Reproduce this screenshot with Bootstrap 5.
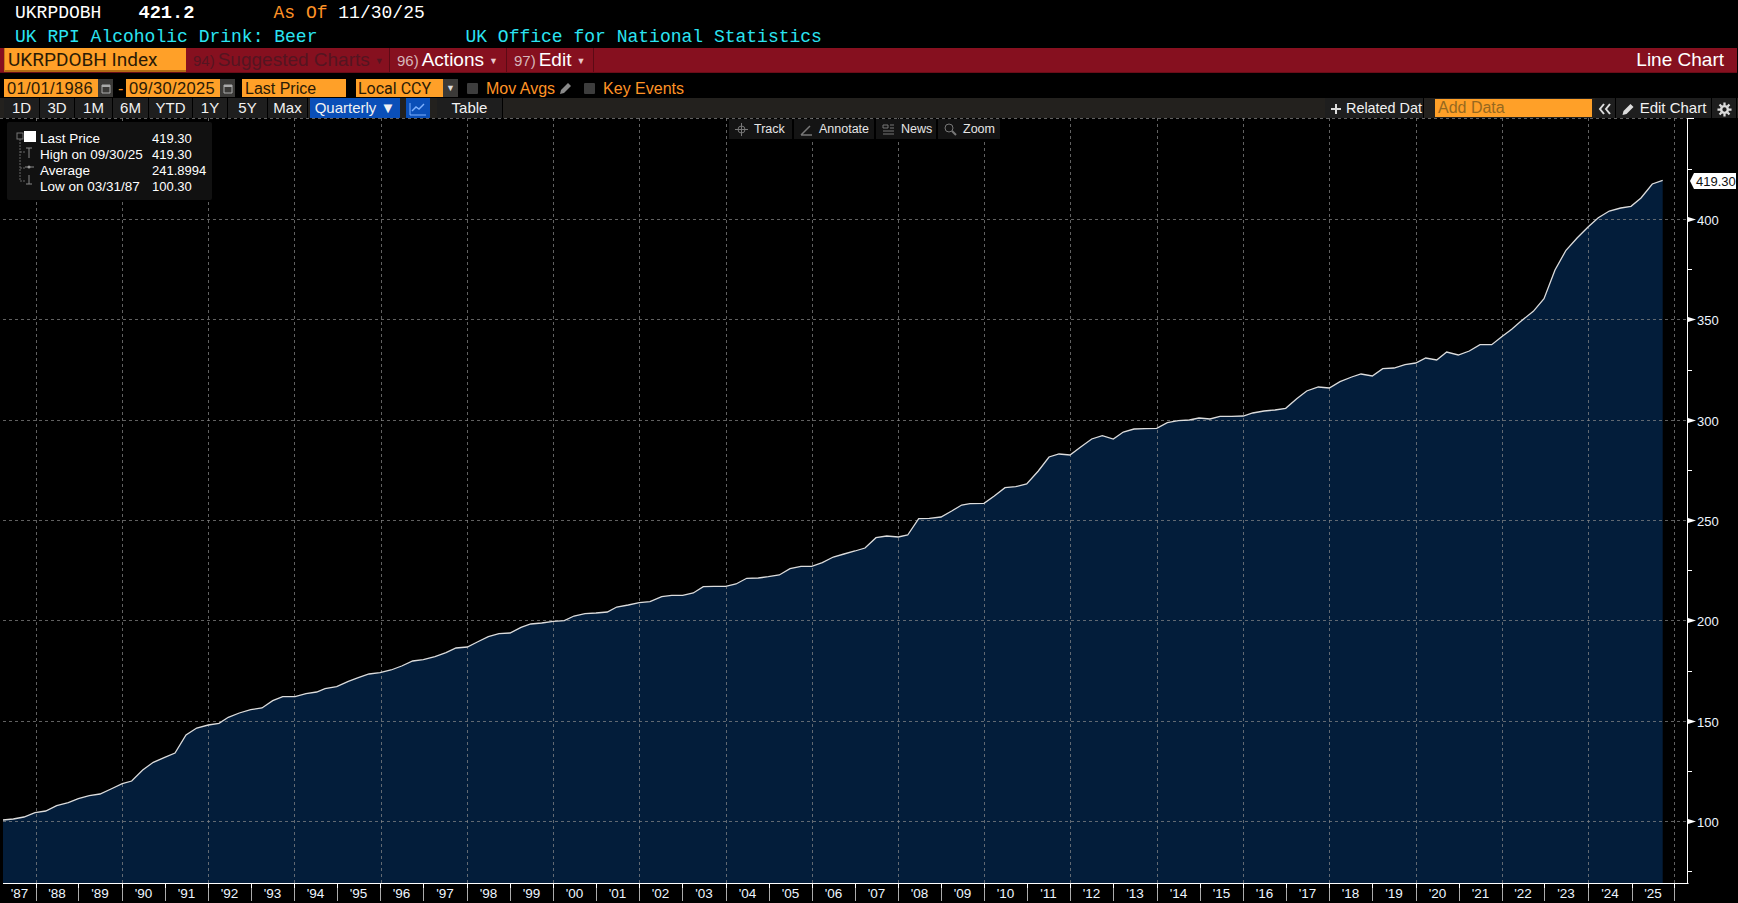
<!DOCTYPE html>
<html lang="en"><head><meta charset="utf-8"><title>UKRPDOBH Line Chart</title>
<link href="https://cdn.jsdelivr.net/npm/bootstrap@5.3.0/dist/css/bootstrap.min.css" rel="stylesheet">
<style>
html,body{height:100%;background:#000;overflow:hidden}
body{font-family:"Liberation Sans",Arial,sans-serif;color:#fff;width:1738px;height:903px}
.hdr{font-family:"Liberation Mono",monospace;font-size:18px;line-height:24px;height:24px;padding-left:15px;padding-top:1px;white-space:pre}
.cy{color:#2be4f2}.og{color:#ff9326}
.hdr b{font-size:18.7px;margin-left:37px;margin-right:79px}
.src{margin-left:148px}
.redbar{height:25px;margin-right:1px;background:#86101f;border-bottom:1px solid #6a0c18;font-size:19px;line-height:24px}
.sec{color:#fff;border-right:1px solid #5c0a15;padding-left:7px;white-space:nowrap}
.sec small{font-size:15px;color:#d6b6ba;margin-right:3px}
.sec i{font-style:normal;font-size:9px;margin-left:5px;vertical-align:2px;color:#e8c9cc}
.dim,.dim small,.dim i{color:#541521}
.oginp{background:#ffa028;color:#2a1a05;white-space:nowrap;overflow:hidden}
.main{width:182px;margin-left:4px;height:24px;padding-left:3px;font-family:Roboto,"Liberation Sans",sans-serif;font-size:19px;line-height:24px;border-left:1px solid #c77a1a;border-bottom:2px solid #b26c14}
.w1{width:204px}.w2{width:117px}.w3{width:87px}
.lc{padding-right:13px}
.filter{height:18px;margin-top:6px;margin-bottom:1px;font-size:16px;line-height:19px;padding-left:4px}
.filter .oginp{height:18px;padding-left:3px}
.date{width:94px;font-size:16.5px;letter-spacing:.35px}
.calb{width:15px;height:18px;background:#3b3a38;margin-right:5px}
.dash{width:8px;color:#ff9326}
.lp{width:104px;margin-left:7px;margin-right:10px}
.filter .ccy{width:87px;padding-left:2px;font-family:Roboto,"Liberation Sans",sans-serif;font-size:16px}
.ddb{width:15px;height:18px;background:#3b3a38;color:#ddd;font-size:9px;text-align:center;margin-right:9px}
.chk{width:11px;height:11px;background:#3d3d3d;margin-right:8px;border-radius:1px}
.pen{margin-right:11px}
.tools{height:20px;background:#23211e;font-size:15px;line-height:20px;padding-left:4px;padding-right:1px}
.tb{background:#1e1e1e;color:#f2f2f2;border-right:1px solid #000;text-align:center;white-space:nowrap;overflow:hidden;height:20px}
.tb1{width:36px}.tb2{width:44px}.tb3{width:40px}.tb4{width:35px}.tb5{width:38px}
.qt{width:90px;background:#0a4fb8;margin-left:2px;margin-right:6px;border:0}
.ic{width:24px;background:#0a4fb8;margin-right:7px;border:0}
.tbl{width:66px}
.rel{width:99px;text-align:left;padding-left:5px;margin-right:11px;font-size:14.4px}
.add{width:157px;height:18px;margin-top:1px;margin-right:3px;padding-left:3px;color:#96681f;line-height:18px;font-size:16px}
.chev{width:21px;color:#ddd}.edt{width:96px}.gear{width:25px}
.plot{position:relative;height:785px}
.plot>svg{display:block}
.legend{position:absolute;left:7px;top:4px;width:205px;height:78px;background:#111;font-size:13.5px;line-height:16px;padding:9px 0 0 9px;border-radius:2px}
.lrow{height:16px;white-space:nowrap}
.lrow span:first-child{width:112px}
.lrow span+span{font-size:13px}
.mini{position:absolute;left:729px;top:1px;height:20px;font-size:12.5px;line-height:20px;gap:2px}
.mb{background:#141414;color:#e6e6e6;height:20px;white-space:nowrap}
.m1{width:63px}.m2{width:80px}.m3{width:60px}.m4{width:62px}
.mb svg{margin:0 6px 0 6px;vertical-align:-3px}
.axt{font-size:13px;fill:#eef6ff}
.yrt{font-size:13.5px;fill:#eef6ff;text-anchor:middle}
.flagt{font-size:13px;fill:#111}
</style></head>
<body>
<div class="hdr d-flex"><span>UKRPDOBH</span><b>421.2</b><span class="og">As Of</span><span> 11/30/25</span></div>
<div class="hdr cy d-flex"><span>UK RPI Alcoholic Drink: Beer</span><span class="src">UK Office for National Statistics</span></div>
<div class="redbar d-flex">
  <div class="oginp main">UKRPDOBH Index</div>
  <div class="sec dim w1"><small>94)</small>Suggested Charts<i>▼</i></div>
  <div class="sec w2"><small>96)</small>Actions<i>▼</i></div>
  <div class="sec w3"><small>97)</small>Edit<i>▼</i></div>
  <div class="ms-auto lc">Line Chart</div>
</div>
<div class="filter d-flex align-items-center">
  <div class="oginp date">01/01/1986</div>
  <div class="calb d-flex align-items-center justify-content-center"><svg width="10" height="11" viewBox="0 0 10 11"><path d="M1 2h8v8H1z" fill="none" stroke="#aaa"/><path d="M1 2h8v2H1z" fill="#aaa"/></svg></div>
  <div class="dash">-</div>
  <div class="oginp date">09/30/2025</div>
  <div class="calb d-flex align-items-center justify-content-center m-0"><svg width="10" height="11" viewBox="0 0 10 11"><path d="M1 2h8v8H1z" fill="none" stroke="#aaa"/><path d="M1 2h8v2H1z" fill="#aaa"/></svg></div>
  <div class="oginp lp">Last Price</div>
  <div class="oginp ccy">Local CCY</div>
  <div class="ddb">▼</div>
  <div class="chk"></div><div class="og me-1">Mov Avgs</div>
  <svg class="pen" width="14" height="14" viewBox="0 0 14 14"><path d="M1 13l1-4 7-7 3 3-7 7z" fill="#8a8a8a"/></svg>
  <div class="chk"></div><div class="og">Key Events</div>
</div>
<div class="tools d-flex">
  <div class="tb tb1">1D</div><div class="tb tb4">3D</div><div class="tb tb5">1M</div><div class="tb tb1">6M</div><div class="tb tb2">YTD</div><div class="tb tb4">1Y</div><div class="tb tb3">5Y</div><div class="tb tb3">Max</div>
  <div class="tb qt">Quarterly ▼</div>
  <div class="tb ic"><svg width="18" height="14" viewBox="0 0 18 14"><path d="M1 1v12h16" fill="none" stroke="#7fb2ff"/><path d="M3 9l4-4 3 2 5-5" fill="none" stroke="#7fb2ff" stroke-width="1.4"/></svg></div>
  <div class="tb tbl">Table</div>
  <div class="tb rel ms-auto"><svg width="12" height="12" viewBox="0 0 12 12" class="me-1"><path d="M6 1v10M1 6h10" stroke="#ddd" stroke-width="2"/></svg>Related Dat</div>
  <div class="oginp add">Add Data</div>
  <div class="tb chev"><svg width="14" height="12" viewBox="0 0 14 12"><path d="M6 1L2 6l4 5M12 1L8 6l4 5" fill="none" stroke="#ddd" stroke-width="2"/></svg></div>
  <div class="tb edt"><svg width="15" height="14" viewBox="0 0 14 14" class="me-1"><path d="M1 13l1-4 7-7 3 3-7 7z" fill="#ddd"/></svg>Edit Chart</div>
  <div class="tb gear"><svg width="15" height="15" viewBox="0 0 16 16"><circle cx="8" cy="8" r="3.6" fill="none" stroke="#ddd" stroke-width="2.6"/><path d="M8 .5v3M8 12.500v3M.5 8h3M12.500 8h3M2.700 2.700l2.100 2.100M11.200 11.200l2.100 2.100M13.300 2.700l-2.100 2.100M4.800 11.200l-2.100 2.100" stroke="#ddd" stroke-width="2.400"/></svg></div>
</div>
<div class="plot">
  <svg id="chart" width="1738" height="785" viewBox="0 118 1738 785" xmlns="http://www.w3.org/2000/svg"></svg>
  <div class="legend d-flex">
    <svg width="24" height="64" viewBox="0 0 24 64" class="flex-shrink-0"><rect x="1" y="2" width="6" height="6" fill="none" stroke="#777"/><path d="M4 8v42M4 21h6M4 37h6M4 50h6" stroke="#666" stroke-dasharray="2 1"/><rect x="8" y="0" width="12" height="11" fill="#fff"/><path d="M10 17h6M13 17v10M9 36h9M10 53h6M13 44v9" stroke="#888"/><circle cx="13" cy="36" r="1.500" fill="#999"/></svg>
    <div>
      <div class="lrow d-flex"><span>Last Price</span><span>419.30</span></div>
      <div class="lrow d-flex"><span>High on 09/30/25</span><span>419.30</span></div>
      <div class="lrow d-flex"><span>Average</span><span>241.8994</span></div>
      <div class="lrow d-flex"><span>Low on 03/31/87</span><span>100.30</span></div>
    </div>
  </div>
  <div class="mini d-flex">
    <div class="mb m1"><svg width="13" height="13" viewBox="0 0 13 13"><circle cx="6.500" cy="6.500" r="3.500" fill="none" stroke="#777"/><path d="M6.500 0v13M0 6.500h13" stroke="#777"/></svg>Track</div>
    <div class="mb m2"><svg width="13" height="13" viewBox="0 0 13 13"><path d="M1 12L10 3M1 12h11" fill="none" stroke="#777" stroke-width="1.500"/></svg>Annotate</div>
    <div class="mb m3"><svg width="13" height="13" viewBox="0 0 13 13"><path d="M1 2h5v3H1zM8 2h4M8 5h4M1 8h11M1 11h11" stroke="#777" fill="none"/></svg>News</div>
    <div class="mb m4"><svg width="13" height="13" viewBox="0 0 13 13"><circle cx="5" cy="5" r="4" fill="none" stroke="#777"/><path d="M8 8l4 4" stroke="#777" stroke-width="2"/></svg>Zoom</div>
  </div>
</div>
<script>
var segs=[
 [0,640,[[9,540],[40,537],[72,531],[105,518],[137,513],[170,497],[205,488],[235,476],[268,467],[300,462],[333,447],[367,431],[395,423],[428,390],[460,367],[494,352],[525,339],[558,285],[590,264],[625,255],[657,250],[685,232],[718,219],[752,209],[786,204],[818,182],[848,170],[885,170],[918,161],[950,156],[975,146],[990,144]]],
 [320,530,[[0,477],[18,473],[50,470],[85,454],[115,443],[147,432],[180,428],[213,420],[245,408],[278,393],[310,389],[345,380],[378,368],[408,354],[442,351],[472,336],[505,320],[537,311],[570,309],[603,292],[632,282],[665,279],[700,274],[733,272],[762,258],[795,251],[828,249],[862,246],[890,231],[925,225],[958,218],[990,215]]],
 [640,440,[[40,480],[65,470],[95,466],[128,466],[160,459],[190,440],[222,439],[257,439],[288,432],[320,415],[355,414],[385,410],[418,405],[450,386],[483,379],[515,379],[547,368],[580,351],[612,342],[645,333],[675,324],[708,293],[740,288],[775,291],[803,285],[836,236],[868,235],[903,231],[935,213],[965,195],[990,191]]],
 [960,390,[[0,347],[35,341],[72,340],[103,318],[135,293],[167,290],[200,282],[235,243],[267,201],[297,192],[330,195],[362,171],[395,147],[427,137],[460,147],[490,126],[522,117],[555,116],[590,115],[622,98],[655,92],[688,90],[717,84],[750,87],[780,79],[815,79],[850,78],[878,69],[912,63],[945,60],[977,55],[990,43]]],
 [1280,270,[[0,417],[18,414],[50,386],[80,363],[115,351],[148,354],[180,335],[215,321],[243,312],[277,318],[308,296],[342,294],[375,284],[407,279],[437,264],[470,270],[500,246],[535,255],[568,243],[600,224],[635,224],[665,200],[695,178],[720,156]]],
 [1500,160,[[30,510],[65,478],[100,454],[132,416],[165,330],[198,271],[232,233],[265,200],[295,173],[328,153],[362,144],[393,139],[423,114],[457,72],[488,61]]]
];
var pts=[];
segs.forEach(function(s){s[2].forEach(function(p){var x=s[0]+p[0]/3,y=s[1]+p[1]/3;if(!pts.length||x>pts[pts.length-1][0]+5)pts.push([x,y]);});});
var line=pts.map(function(p){return p[0].toFixed(1)+','+p[1].toFixed(1)}).join(' ');
var last=pts[pts.length-1][0].toFixed(1);
var h='<rect x="0" y="118" width="1738" height="785" fill="#000"/>';
h+='<polygon fill="#031d3a" points="3,883 '+line+' '+last+',883"/>';
var ys=[219.5,319.5,420.5,520.5,620.5,721.5,821.5],lb=[400,350,300,250,200,150,100];
var grid='';
ys.forEach(function(y){grid+='M3 '+y+'H1688';});
var gx=[36,122,208,294,381,467,553,639,726,812,898,984,1070,1157,1243,1329,1416,1502,1588,1674];
gx.forEach(function(x){grid+='M'+(x+.5)+' 118V883';});
grid+='M0 118.500H1688';
h+='<path d="'+grid+'" stroke="#8a8a8a" stroke-opacity=".7" stroke-dasharray="3 3" fill="none"/>';
h+='<polyline points="'+line+'" fill="none" stroke="#dcdcdc" stroke-width="1.300"/>';
h+='<path d="M3 883.500H1688.500M1687.500 118V884" stroke="#fff" fill="none"/>';
ys.forEach(function(y,i){
 h+='<path d="M1688 '+(y-2.5)+'L1696 '+y+'L1688 '+(y+2.5)+'z" fill="#fff"/>';
 h+='<text class="axt" x="1697" y="'+(y+5)+'">'+lb[i]+'</text>';
 h+='<path d="M1688 '+(Math.round(y-50.2)+.5)+'h4" stroke="#fff"/>';
});
h+='<path d="M1688 871.500h4M1688 118.500h6" stroke="#fff"/>';
var ticks=[36,78,122,165,208,251,294,337,380,423,467,510,553,596,639,682,726,769,812,855,898,941,984,1027,1070,1113,1157,1200,1243,1286,1329,1372,1416,1459,1502,1544,1588,1632,1674];
var prev=3;
ticks.forEach(function(t,i){
 h+='<path d="M'+(t+.5)+' 884V901" stroke="#aaa"/><path d="M'+(t+.5)+' 884v4" stroke="#fff"/>';
 var yr=(87+i)%100; yr=(yr<10?'0':'')+yr;
 h+='<text class="yrt" x="'+((prev+t)/2)+'" y="898">\''+yr+'</text>';
 prev=t;
});
h+='<polygon points="1690,181 1694,173 1736,173 1736,189 1694,189" fill="#fff"/><text class="flagt" x="1696" y="186">419.30</text>';
document.getElementById('chart').innerHTML=h;
</script>
<script src="https://cdn.jsdelivr.net/npm/bootstrap@5.3.0/dist/js/bootstrap.bundle.min.js"></script>
</body></html>
